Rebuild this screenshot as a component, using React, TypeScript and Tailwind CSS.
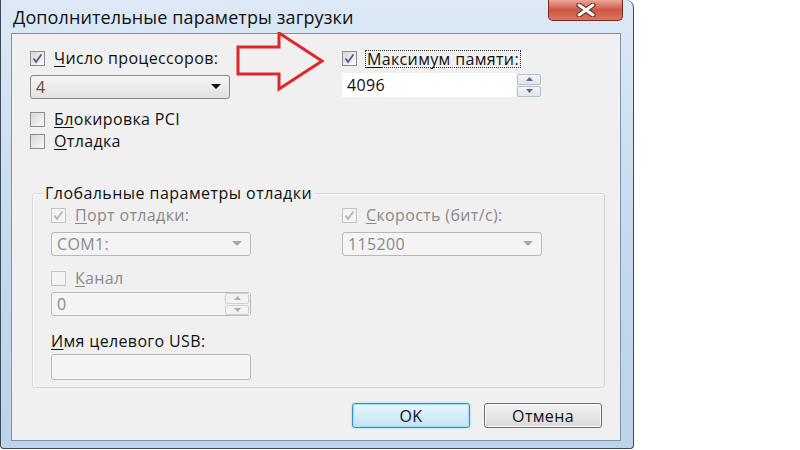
import React from "react";

const font = { fontFamily: '"Open Sans", "Noto Sans", "DejaVu Sans", sans-serif' };

function Check({ checked, disabled }: { checked?: boolean; disabled?: boolean }) {
  return (
    <div
      className={
        "w-[15px] h-[15px] border flex items-center justify-center shrink-0 " +
        (disabled
          ? "border-[#c4c4c4] bg-[#f4f4f4]"
          : "border-[#8e8f8f] bg-gradient-to-br from-[#d6d6d6] to-[#fbfbfb]")
      }
    >
      {checked && (
        <svg width="13" height="13" viewBox="0 0 13 13">
          <path
            d="M2.5 6.5 L5 10 L10.5 2.5"
            fill="none"
            stroke={disabled ? "#b4b4b4" : "#4a5d8f"}
            strokeWidth="1.8"
          />
        </svg>
      )}
    </div>
  );
}

function CheckRow({
  checked,
  disabled,
  first,
  rest,
}: {
  checked?: boolean;
  disabled?: boolean;
  first: string;
  rest: string;
}) {
  return (
    <div className="flex items-center h-[17px]">
      <Check checked={checked} disabled={disabled} />
      <div
        className={
          "ml-[9px] text-[16px] leading-[17px] tracking-[0.35px] whitespace-nowrap " +
          (disabled ? "text-[#8a8a8a]" : "text-[#111]")
        }
      >
        <span className="underline underline-offset-2">{first}</span>
        {rest}
      </div>
    </div>
  );
}

function Arrow({ color }: { color: string }) {
  return (
    <svg width="10" height="6" viewBox="0 0 10 6">
      <path d="M0 0 L10 0 L5 5 Z" fill={color} />
    </svg>
  );
}

function Combo({ value, disabled }: { value: string; disabled?: boolean }) {
  return (
    <div
      className={
        "w-[200px] h-[24px] rounded-[3px] border flex items-center pl-[5px] pr-[8px] text-[16px] tracking-[0.35px] " +
        (disabled
          ? "border-[#b9b9b9] bg-[#f4f4f4] text-[#8a8a8a]"
          : "border-[#8a8a8a] bg-gradient-to-b from-[#f5f5f5] to-[#e2e2e2] text-[#6a4a2a]")
      }
    >
      <span className="flex-1">{value}</span>
      <Arrow color={disabled ? "#a8a8a8" : "#111"} />
    </div>
  );
}

function SpinBtn({ up, disabled }: { up?: boolean; disabled?: boolean }) {
  return (
    <div
      className={
        "h-[11px] flex items-center justify-center border rounded-[2px] " +
        (disabled ? "border-[#cfcfcf] bg-[#f2f2f2]" : "border-[#b8c0c8] bg-gradient-to-b from-[#f6f6f6] to-[#e4e4e4]")
      }
    >
      <svg width="7" height="4" viewBox="0 0 7 4">
        <path d={up ? "M0 4 L7 4 L3.5 0 Z" : "M0 0 L7 0 L3.5 4 Z"} fill={disabled ? "#b0b0b0" : "#4e6a8e"} />
      </svg>
    </div>
  );
}

function Spin({ value, disabled }: { value: string; disabled?: boolean }) {
  return (
    <div
      className={
        "w-[200px] h-[24px] flex items-stretch " +
        (disabled ? "border border-[#b9b9b9] rounded-[3px] bg-[#f4f4f4]" : "bg-white")
      }
    >
      <div
        className={
          "flex-1 flex items-center pl-[5px] text-[16px] tracking-[0.35px] " +
          (disabled ? "text-[#8a8a8a]" : "text-[#111]")
        }
      >
        {value}
      </div>
      <div className="w-[26px] flex flex-col justify-center gap-[1px] px-[1px] bg-[#f0f0f0]">
        <SpinBtn up disabled={disabled} />
        <SpinBtn disabled={disabled} />
      </div>
    </div>
  );
}

export default function App() {
  return (
    <div className="w-[800px] h-[450px] bg-white overflow-hidden" style={font}>
      <div className="relative w-[634px] h-[449px] flex flex-col border-l border-r border-b border-[#3c4a5a] rounded-tr-[8px] rounded-bl-[4px] rounded-br-[4px] bg-gradient-to-b from-[#dde9f5] via-[#c7daee] to-[#bcd3ea] pl-[10px] pr-[12px] pb-[7px]">
        <div className="h-[33px] flex items-center pl-[2px] pt-[2px] shrink-0">
          <span className="text-[18px] text-[#111] tracking-[0.1px]">Дополнительные параметры загрузки</span>
        </div>
        <div className="absolute top-0 right-[10px] w-[75px] h-[21px] rounded-b-[5px] border border-t-0 border-[#7a2a22] bg-gradient-to-b from-[#eaa698] via-[#cd5440] to-[#dc7862] flex items-center justify-center">
          <svg width="22" height="14" viewBox="0 0 22 14">
            <path d="M4 2 L18 12 M18 2 L4 12" stroke="#4a2a26" strokeWidth="5" strokeLinecap="round" />
            <path d="M4 2 L18 12 M18 2 L4 12" stroke="#ffffff" strokeWidth="3" strokeLinecap="round" />
          </svg>
        </div>
        <div className="flex-1 border border-[#7f93a8] bg-[#f0f0f0] pl-[18px] pt-[16px] pr-[18px] relative">
          <div className="flex">
            <div className="w-[312px] flex flex-col">
              <CheckRow checked first="Ч" rest="исло процессоров:" />
              <div className="mt-[8px]">
                <Combo value="4" />
              </div>
              <div className="mt-[12px]">
                <CheckRow first="Бл" rest="окировка PCI" />
              </div>
              <div className="mt-[5px]">
                <CheckRow first="О" rest="тладка" />
              </div>
            </div>
            <div className="flex flex-col">
              <div className="flex items-center h-[17px]">
                <Check checked />
                <div className="ml-[8px] text-[16px] leading-[16px] tracking-[0.35px] text-[#111] border border-dotted border-[#333] px-[1px] whitespace-nowrap">
                  <span className="underline underline-offset-2">М</span>аксимум памяти:
                </div>
              </div>
              <div className="mt-[6px]">
                <Spin value="4096" />
              </div>
            </div>
          </div>

          <div className="relative mt-[43px] ml-[2px] w-[573px] h-[195px] border border-[#d3d8dc] rounded-[3px] shadow-[inset_1px_1px_0_#ffffff] pl-[18px] pt-[13px]">
            <div className="absolute -top-[11px] left-[10px] px-[2px] bg-[#f0f0f0] text-[16px] leading-[20px] tracking-[0.45px] text-[#111] whitespace-nowrap">
              Глобальные параметры отладки
            </div>
            <div className="flex">
              <div className="w-[291px] flex flex-col">
                <CheckRow checked disabled first="П" rest="орт отладки:" />
                <div className="mt-[8px]">
                  <Combo value="COM1:" disabled />
                </div>
                <div className="mt-[14px]">
                  <CheckRow disabled first="К" rest="анал" />
                </div>
                <div className="mt-[5px]">
                  <Spin value="0" disabled />
                </div>
                <div className="mt-[17px] h-[17px] text-[16px] leading-[17px] tracking-[0.35px] text-[#111] whitespace-nowrap">
                  <span className="underline underline-offset-2">И</span>мя целевого USB:
                </div>
                <div className="mt-[4px] w-[200px] h-[26px] border border-[#b9b9b9] rounded-[3px] bg-[#f4f4f4]" />
              </div>
              <div className="flex flex-col">
                <CheckRow checked disabled first="С" rest="корость (бит/с):" />
                <div className="mt-[8px]">
                  <Combo value="115200" disabled />
                </div>
              </div>
            </div>
          </div>

          <div className="mt-[15px] flex justify-end gap-[14px]">
            <div className="w-[118px] h-[25px] rounded-[3px] border border-[#3c8ec4] shadow-[0_0_2px_#6ec2ee,inset_0_0_0_1px_#9fdcf8] bg-gradient-to-b from-[#eaf6fd] to-[#c2e3f5] flex items-center justify-center text-[16px] tracking-[0.35px] text-[#111]">
              OK
            </div>
            <div className="w-[118px] h-[25px] rounded-[3px] border border-[#707070] shadow-[inset_0_0_0_1px_#fbfbfb] bg-gradient-to-b from-[#f3f3f3] to-[#d9d9d9] flex items-center justify-center text-[16px] tracking-[0.35px] text-[#111]">
              Отмена
            </div>
          </div>

          <svg className="absolute left-[224px] top-[-2px]" width="90" height="60" viewBox="0 0 90 60">
            <path
              d="M2 15 L43 15 L43 1 L86 29 L43 57 L43 42 L2 42 Z"
              fill="none"
              stroke="#e0262a"
              strokeWidth="3"
              strokeLinejoin="miter"
            />
          </svg>
        </div>
      </div>
    </div>
  );
}
